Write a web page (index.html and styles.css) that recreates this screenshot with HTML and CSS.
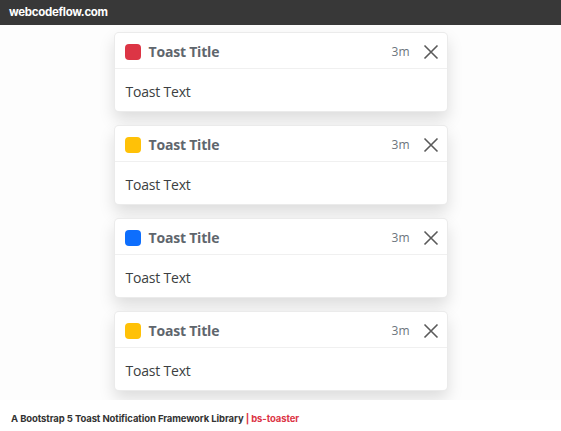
FILE: index.html
```html
<!DOCTYPE html>
<html>
<head>
<meta charset="utf-8">
<link rel="stylesheet" href="styles.css">
</head>
<body>
<header class="topbar">webcodeflow.com</header>
<main class="stage">
  <div class="toast">
    <div class="toast-header">
      <span class="dot dot-red"></span>
      <strong class="title">Toast Title</strong>
      <small class="time">3m</small>
      <button class="close" aria-label="Close"><svg viewBox="0 0 16 16" width="16" height="16"><path d="M1.5 1.5 14.5 14.5M14.5 1.5 1.5 14.5" stroke="currentColor" stroke-width="1.6" fill="none"/></svg></button>
    </div>
    <div class="toast-body">Toast Text</div>
  </div>
  <div class="toast">
    <div class="toast-header">
      <span class="dot dot-yellow"></span>
      <strong class="title">Toast Title</strong>
      <small class="time">3m</small>
      <button class="close" aria-label="Close"><svg viewBox="0 0 16 16" width="16" height="16"><path d="M1.5 1.5 14.5 14.5M14.5 1.5 1.5 14.5" stroke="currentColor" stroke-width="1.6" fill="none"/></svg></button>
    </div>
    <div class="toast-body">Toast Text</div>
  </div>
  <div class="toast">
    <div class="toast-header">
      <span class="dot dot-blue"></span>
      <strong class="title">Toast Title</strong>
      <small class="time">3m</small>
      <button class="close" aria-label="Close"><svg viewBox="0 0 16 16" width="16" height="16"><path d="M1.5 1.5 14.5 14.5M14.5 1.5 1.5 14.5" stroke="currentColor" stroke-width="1.6" fill="none"/></svg></button>
    </div>
    <div class="toast-body">Toast Text</div>
  </div>
  <div class="toast">
    <div class="toast-header">
      <span class="dot dot-yellow"></span>
      <strong class="title">Toast Title</strong>
      <small class="time">3m</small>
      <button class="close" aria-label="Close"><svg viewBox="0 0 16 16" width="16" height="16"><path d="M1.5 1.5 14.5 14.5M14.5 1.5 1.5 14.5" stroke="currentColor" stroke-width="1.6" fill="none"/></svg></button>
    </div>
    <div class="toast-body">Toast Text</div>
  </div>
</main>
<footer class="footer">A Bootstrap 5 Toast Notification Framework Library <span class="accent">| bs-toaster</span></footer>
</body>
</html>
```
FILE: styles.css
```css
html, body {
  margin: 0;
  padding: 0;
  height: 100%;
}
body {
  background: #fdfdfd;
  font-family: "Open Sans", "Noto Sans", sans-serif;
  display: flex;
  flex-direction: column;
  overflow: hidden;
}
.topbar {
  height: 25px;
  flex: 0 0 25px;
  background: #383838;
  color: #fff;
  font-family: "Inter", "DejaVu Sans", sans-serif;
  font-weight: 700;
  font-size: 11.5px;
  line-height: 25px;
  padding-left: 9px;
  letter-spacing: -0.3px;
}
.stage {
  flex: 0 0 375px;
  height: 375px;
  overflow: hidden;
  display: flex;
  flex-direction: column;
  align-items: center;
  gap: 13px;
  padding-top: 7px;
  box-sizing: border-box;
}
.toast {
  width: 334px;
  box-sizing: border-box;
  background: #fff;
  border: 1px solid rgba(0,0,0,.08);
  border-radius: 5px;
  box-shadow: 0 8px 16px rgba(0,0,0,.13);
  flex: 0 0 auto;
}
.toast-header {
  display: flex;
  align-items: center;
  height: 33px;
  padding: 2px 8px 0 10px;
  border-bottom: 1px solid rgba(0,0,0,.06);
}
.dot {
  width: 16px;
  height: 16px;
  border-radius: 4px;
  margin-right: 8px;
}
.dot-red { background: #dc3545; }
.dot-yellow { background: #ffc107; }
.dot-blue { background: #0d6efd; }
.title {
  font-size: 14px;
  font-weight: 700;
  color: #5f666d;
  margin-right: auto;
  letter-spacing: -0.2px;
}
.time {
  font-size: 12px;
  color: #6c757d;
  margin-right: 13px;
}
.close {
  border: 0;
  background: transparent;
  padding: 0;
  width: 16px;
  height: 16px;
  color: #5a5a5a;
  display: flex;
}
.toast-body {
  padding: 12px 11px 9px;
  font-size: 14px;
  line-height: 21px;
  color: #3c3f42;
  letter-spacing: -0.2px;
}
.footer {
  flex: 1;
  background: #fff;
  font-family: "Inter", "DejaVu Sans", sans-serif;
  font-weight: 700;
  font-size: 9.5px;
  color: #333;
  padding: 13px 0 0 11px;
  letter-spacing: -0.1px;
}
.accent { color: #dc3545; }
```
